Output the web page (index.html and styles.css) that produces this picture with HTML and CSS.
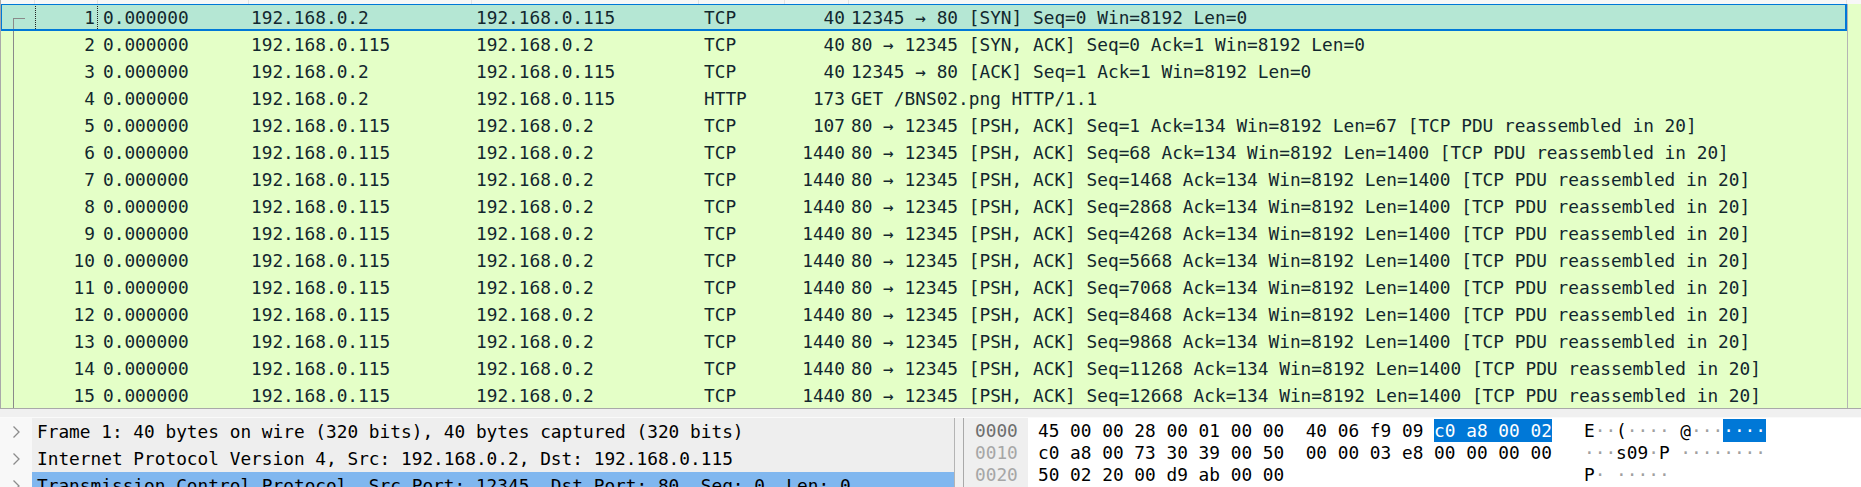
FILE: index.html
```html
<!DOCTYPE html>
<html>
<head>
<meta charset="utf-8">
<link rel="stylesheet" href="styles.css">
</head>
<body>
<div class="plist">
  <div class="hdr">
    <div class="h gutw"></div><div class="h now"></div><div class="h timew"></div><div class="h srcw"></div><div class="h dstw"></div><div class="h protow"></div><div class="h lenw"></div><div class="h infow"></div>
  </div>
  <div class="rows">
    <div class="row sel"><div class="c gut first"></div><div class="c no focus">1</div><div class="c time">0.000000</div><div class="c src">192.168.0.2</div><div class="c dst">192.168.0.115</div><div class="c proto">TCP</div><div class="c len">40</div><div class="c info">12345 → 80 [SYN] Seq=0 Win=8192 Len=0</div></div>
    <div class="row"><div class="c gut"></div><div class="c no">2</div><div class="c time">0.000000</div><div class="c src">192.168.0.115</div><div class="c dst">192.168.0.2</div><div class="c proto">TCP</div><div class="c len">40</div><div class="c info">80 → 12345 [SYN, ACK] Seq=0 Ack=1 Win=8192 Len=0</div></div>
    <div class="row"><div class="c gut"></div><div class="c no">3</div><div class="c time">0.000000</div><div class="c src">192.168.0.2</div><div class="c dst">192.168.0.115</div><div class="c proto">TCP</div><div class="c len">40</div><div class="c info">12345 → 80 [ACK] Seq=1 Ack=1 Win=8192 Len=0</div></div>
    <div class="row"><div class="c gut"></div><div class="c no">4</div><div class="c time">0.000000</div><div class="c src">192.168.0.2</div><div class="c dst">192.168.0.115</div><div class="c proto">HTTP</div><div class="c len">173</div><div class="c info">GET /BNS02.png HTTP/1.1</div></div>
    <div class="row"><div class="c gut"></div><div class="c no">5</div><div class="c time">0.000000</div><div class="c src">192.168.0.115</div><div class="c dst">192.168.0.2</div><div class="c proto">TCP</div><div class="c len">107</div><div class="c info">80 → 12345 [PSH, ACK] Seq=1 Ack=134 Win=8192 Len=67 [TCP PDU reassembled in 20]</div></div>
    <div class="row"><div class="c gut"></div><div class="c no">6</div><div class="c time">0.000000</div><div class="c src">192.168.0.115</div><div class="c dst">192.168.0.2</div><div class="c proto">TCP</div><div class="c len">1440</div><div class="c info">80 → 12345 [PSH, ACK] Seq=68 Ack=134 Win=8192 Len=1400 [TCP PDU reassembled in 20]</div></div>
    <div class="row"><div class="c gut"></div><div class="c no">7</div><div class="c time">0.000000</div><div class="c src">192.168.0.115</div><div class="c dst">192.168.0.2</div><div class="c proto">TCP</div><div class="c len">1440</div><div class="c info">80 → 12345 [PSH, ACK] Seq=1468 Ack=134 Win=8192 Len=1400 [TCP PDU reassembled in 20]</div></div>
    <div class="row"><div class="c gut"></div><div class="c no">8</div><div class="c time">0.000000</div><div class="c src">192.168.0.115</div><div class="c dst">192.168.0.2</div><div class="c proto">TCP</div><div class="c len">1440</div><div class="c info">80 → 12345 [PSH, ACK] Seq=2868 Ack=134 Win=8192 Len=1400 [TCP PDU reassembled in 20]</div></div>
    <div class="row"><div class="c gut"></div><div class="c no">9</div><div class="c time">0.000000</div><div class="c src">192.168.0.115</div><div class="c dst">192.168.0.2</div><div class="c proto">TCP</div><div class="c len">1440</div><div class="c info">80 → 12345 [PSH, ACK] Seq=4268 Ack=134 Win=8192 Len=1400 [TCP PDU reassembled in 20]</div></div>
    <div class="row"><div class="c gut"></div><div class="c no">10</div><div class="c time">0.000000</div><div class="c src">192.168.0.115</div><div class="c dst">192.168.0.2</div><div class="c proto">TCP</div><div class="c len">1440</div><div class="c info">80 → 12345 [PSH, ACK] Seq=5668 Ack=134 Win=8192 Len=1400 [TCP PDU reassembled in 20]</div></div>
    <div class="row"><div class="c gut"></div><div class="c no">11</div><div class="c time">0.000000</div><div class="c src">192.168.0.115</div><div class="c dst">192.168.0.2</div><div class="c proto">TCP</div><div class="c len">1440</div><div class="c info">80 → 12345 [PSH, ACK] Seq=7068 Ack=134 Win=8192 Len=1400 [TCP PDU reassembled in 20]</div></div>
    <div class="row"><div class="c gut"></div><div class="c no">12</div><div class="c time">0.000000</div><div class="c src">192.168.0.115</div><div class="c dst">192.168.0.2</div><div class="c proto">TCP</div><div class="c len">1440</div><div class="c info">80 → 12345 [PSH, ACK] Seq=8468 Ack=134 Win=8192 Len=1400 [TCP PDU reassembled in 20]</div></div>
    <div class="row"><div class="c gut"></div><div class="c no">13</div><div class="c time">0.000000</div><div class="c src">192.168.0.115</div><div class="c dst">192.168.0.2</div><div class="c proto">TCP</div><div class="c len">1440</div><div class="c info">80 → 12345 [PSH, ACK] Seq=9868 Ack=134 Win=8192 Len=1400 [TCP PDU reassembled in 20]</div></div>
    <div class="row"><div class="c gut"></div><div class="c no">14</div><div class="c time">0.000000</div><div class="c src">192.168.0.115</div><div class="c dst">192.168.0.2</div><div class="c proto">TCP</div><div class="c len">1440</div><div class="c info">80 → 12345 [PSH, ACK] Seq=11268 Ack=134 Win=8192 Len=1400 [TCP PDU reassembled in 20]</div></div>
    <div class="row"><div class="c gut"></div><div class="c no">15</div><div class="c time">0.000000</div><div class="c src">192.168.0.115</div><div class="c dst">192.168.0.2</div><div class="c proto">TCP</div><div class="c len">1440</div><div class="c info">80 → 12345 [PSH, ACK] Seq=12668 Ack=134 Win=8192 Len=1400 [TCP PDU reassembled in 20]</div></div>
  </div>
</div>
<div class="hsplit"></div>
<div class="bottom">
  <div class="tree">
    <div class="trow"><div class="chev"><svg width="9" height="14" viewBox="0 0 9 14"><polyline points="1.5,1.5 7,7 1.5,12.5" fill="none" stroke="#8c8c8c" stroke-width="1.3"/></svg></div><div class="ttxt">Frame 1: 40 bytes on wire (320 bits), 40 bytes captured (320 bits)</div></div>
    <div class="trow"><div class="chev"><svg width="9" height="14" viewBox="0 0 9 14"><polyline points="1.5,1.5 7,7 1.5,12.5" fill="none" stroke="#8c8c8c" stroke-width="1.3"/></svg></div><div class="ttxt">Internet Protocol Version 4, Src: 192.168.0.2, Dst: 192.168.0.115</div></div>
    <div class="trow tsel"><div class="chev"><svg width="9" height="14" viewBox="0 0 9 14"><polyline points="1.5,1.5 7,7 1.5,12.5" fill="none" stroke="#8c8c8c" stroke-width="1.3"/></svg></div><div class="ttxt">Transmission Control Protocol, Src Port: 12345, Dst Port: 80, Seq: 0, Len: 0</div></div>
  </div>
  <div class="vsplit"></div>
  <div class="hex">
    <div class="offcol">
      <div class="off cur">0000</div>
      <div class="off">0010</div>
      <div class="off">0020</div>
    </div>
    <div class="datacol">
      <div class="hline">45 00 00 28 00 01 00 00  40 06 f9 09 <span class="hsel">c0 a8 00 02</span>   E<span class="np">··</span>(<span class="np">····</span> @<span class="np">···</span><span class="hsel">····</span></div>
      <div class="hline">c0 a8 00 73 30 39 00 50  00 00 03 e8 00 00 00 00   <span class="np">···</span>s09<span class="np">·</span>P <span class="np">········</span></div>
      <div class="hline">50 02 20 00 d9 ab 00 00                            P<span class="np">·</span> <span class="np">·····</span></div>
    </div>
  </div>
</div>
</body>
</html>
```

FILE: styles.css
```css
html, body {
  margin: 0;
  padding: 0;
}
body {
  width: 1861px;
  height: 487px;
  overflow: hidden;
  background: #f0f0f0;
  font-family: "DejaVu Sans Mono", "Liberation Mono", monospace;
  font-size: 17.8px;
  color: #12272e;
}

/* ---------- packet list ---------- */
.plist {
  height: 408px;
  overflow: hidden;
  background: #e4ffc7;
  border-left: 1px solid #a9a9a9;
  border-bottom: 1px solid #a9a9a9;
}
.hdr {
  display: grid;
  grid-template-columns: 34px 63px 151px 223px 227px 86px 64px 998px;
  height: 4px;
  background: #f7f7f7;
}
.h {
  border-right: 1px solid #e2e2e2;
}
.rows {
  width: 1846px;
  border-right: 1px solid #b4b4b4;
}
.row {
  display: grid;
  grid-template-columns: 34px 63px 151px 223px 227px 86px 64px 1fr;
  height: 27px;
  line-height: 27px;
  white-space: pre;
}
.row.sel {
  position: relative;
  background: #b5e7d4;
}
.row.sel::after {
  content: "";
  position: absolute;
  left: 0;
  top: 0;
  right: 0;
  bottom: 0;
  border: solid #0078d7;
  border-width: 1px 2px 2px 1px;
  pointer-events: none;
}
.c {
  overflow: hidden;
}
.gut {
  background: linear-gradient(#8a8a8a, #8a8a8a) no-repeat 12px 0 / 1px 100%;
}
.gut.first {
  background:
    linear-gradient(#8a8a8a, #8a8a8a) no-repeat 12px 14px / 1px 13px,
    linear-gradient(#8a8a8a, #8a8a8a) no-repeat 12px 14px / 12px 1px;
}
.no {
  text-align: right;
  padding-right: 3px;
}
.no.focus {
  outline: 1px dotted #222;
  outline-offset: -1px;
}
.time { padding-left: 5px; }
.src { padding-left: 2px; }
.dst { padding-left: 4px; }
.proto { padding-left: 5px; }
.len {
  text-align: right;
  padding-right: 4px;
}
.info { padding-left: 2px; }

/* ---------- splitter ---------- */
.hsplit {
  height: 8px;
}

/* ---------- bottom panes ---------- */
.bottom {
  display: flex;
  height: 69px;
  border-top: 1px solid #fafafa;
}
.tree {
  width: 954px;
  background: #f8f8f8;
  border-right: 1px solid #b4b4b4;
  color: #000;
}
.trow {
  display: flex;
  height: 27px;
  line-height: 27px;
}
.chev {
  width: 32px;
  display: flex;
  align-items: center;
  padding-left: 12px;
  box-sizing: border-box;
}
.ttxt {
  flex: 1;
  background: #eeeeee;
  padding-left: 5px;
  white-space: pre;
  overflow: hidden;
}
.tsel .ttxt {
  background: #80b7ef;
}
.vsplit {
  width: 8px;
  border-right: 1px solid #a9a9a9;
}
.hex {
  flex: 1;
  display: flex;
  background: #ffffff;
  color: #000;
}
.offcol {
  width: 64px;
  box-sizing: border-box;
  padding: 2px 0 0 11px;
  background: #efefef;
}
.off {
  height: 22px;
  line-height: 22px;
  color: #a6a6a6;
}
.off.cur {
  color: #6e6e6e;
}
.datacol {
  padding: 2px 0 0 10px;
}
.hline {
  height: 22px;
  line-height: 22px;
  white-space: pre;
}
.np {
  color: #a0a0a0;
}
.hsel {
  background: #0078d7;
  color: #ffffff;
  padding: 1px 0;
}
```
